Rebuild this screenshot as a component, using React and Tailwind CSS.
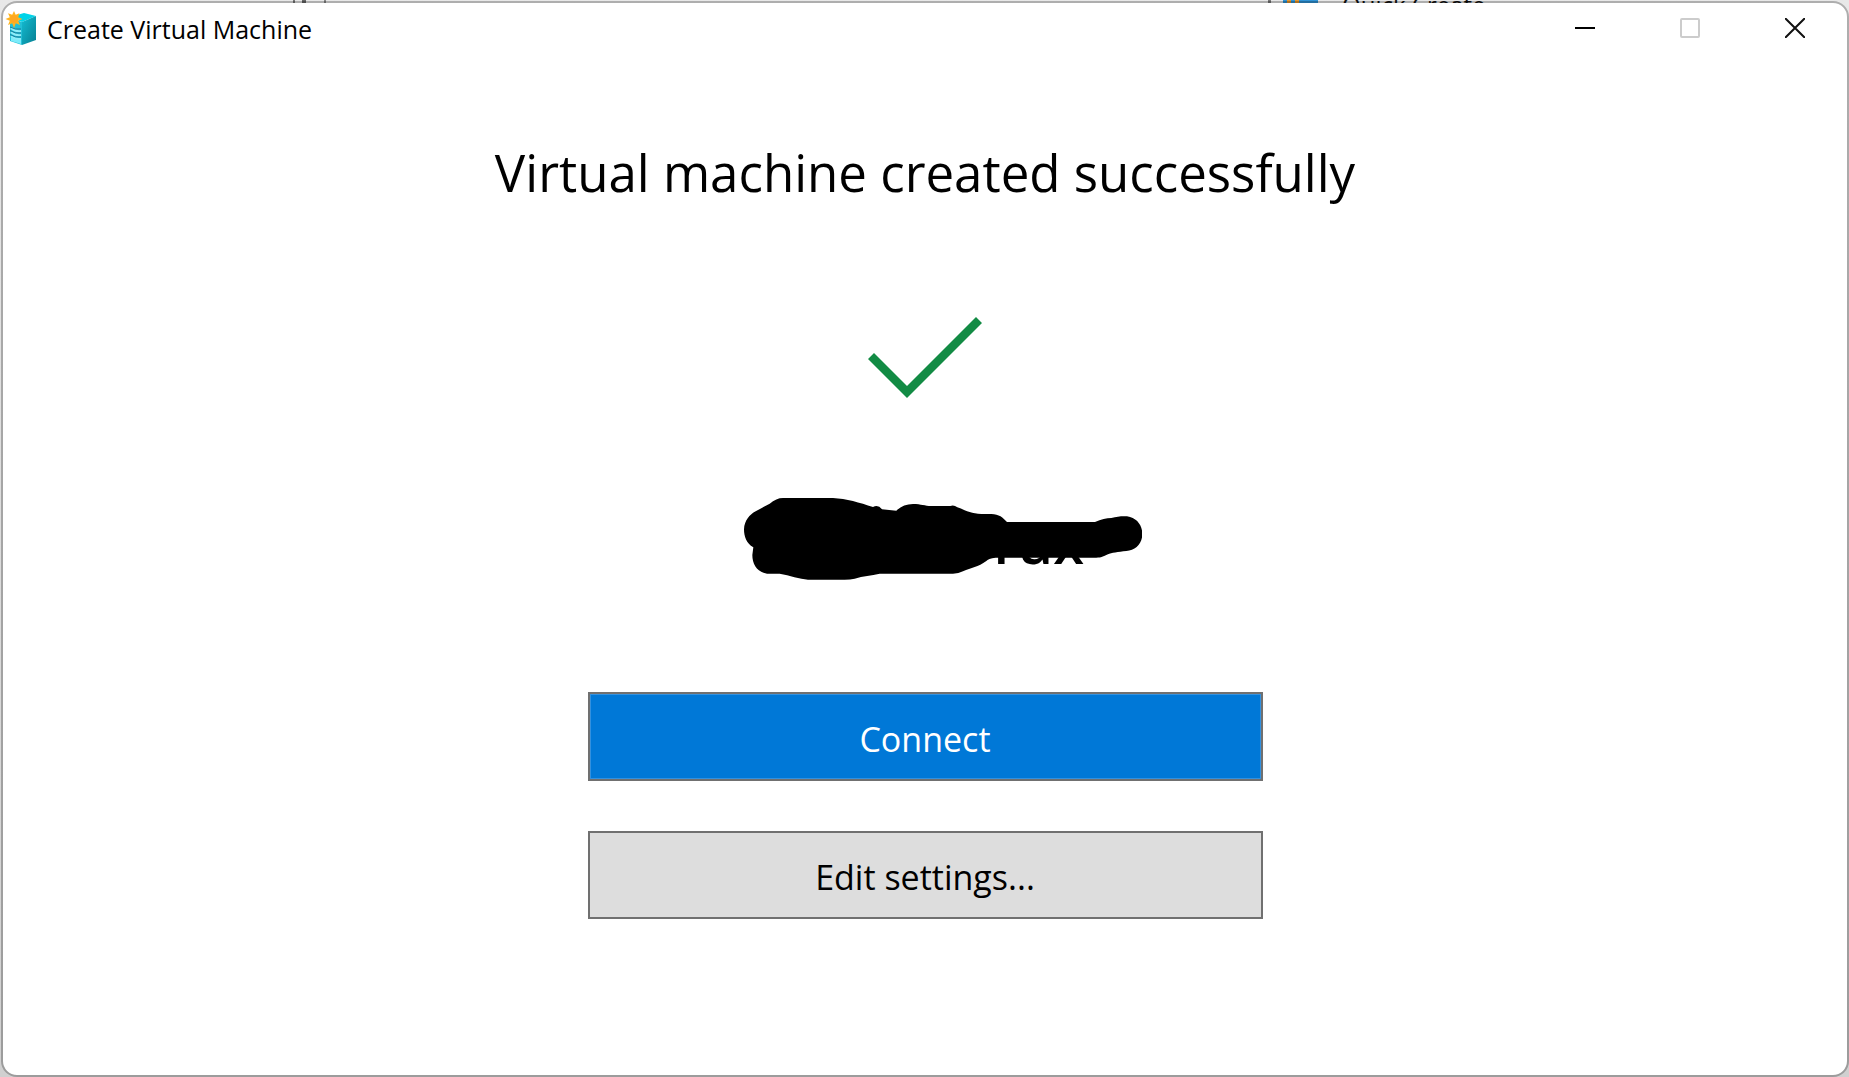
import React from "react";

function ServerIcon() {
  return (
    <svg width="32" height="36" viewBox="0 0 32 36" aria-hidden="true">
      <defs>
        <linearGradient id="side" x1="0" y1="0" x2="1" y2="1">
          <stop offset="0" stopColor="#14bcd2" />
          <stop offset="1" stopColor="#067f92" />
        </linearGradient>
      </defs>
      <path d="M5 7 19 3 31 6 17 12Z" fill="#00d3e8" />
      <path d="M17 12 31 6V30L17 35Z" fill="url(#side)" />
      <path d="M5 8 17 12V35L5 31Z" fill="#22bfd6" />
      <path d="M6 27 16 29V34L6 31Z" fill="#7cebfa" />
      <path d="M6 18Q10 22 16 21M6 22Q10 26 16 25M6 26Q10 29 16 29" stroke="#8fecf8" strokeWidth="2" fill="none" />
      <path d="M5 17Q10 20 16 19M5 20.500Q10 24 16 23M5 24.500Q10 28 16 27" stroke="#1c7d9c" strokeWidth="1" fill="none" />
      <path d="M9 1 10.700 4.800 14.500 3.300 13.200 7.200 17.500 9 13.200 10.800 15 15 10.800 13.300 9 18 7.200 13.300 3 15 4.800 10.800 0.500 9 4.800 7.200 3 3.300 7.200 4.800Z" fill="#ffb41f" />
      <circle cx="9" cy="9" r="4" fill="#ffa820" />
    </svg>
  );
}

function WindowBehind() {
  return (
    <div className="absolute inset-x-0 top-0 h-[3px] overflow-hidden" aria-hidden="true">
      <div className="flex h-2.5 items-center">
        <div className="flex w-[1283px] items-center">
          <span className="ml-[293px] w-0.5 bg-[#777] py-2" />
          <span className="ml-[7px] w-1 bg-[#666] py-2" />
          <span className="ml-[18px] w-0.5 bg-[#888] py-2" />
          <span className="mr-3 ml-auto w-[3px] bg-[#777] py-2" />
        </div>
        <span className="flex w-[35px] bg-[#2f93d6] pb-2 pl-1">
          <span className="w-3 border-x-4 border-[#e8962a] py-1" />
        </span>
        <span className="ml-6 text-2xl leading-6 whitespace-nowrap text-[#111]">Quick Create</span>
      </div>
    </div>
  );
}

function TitleBar() {
  return (
    <header className="flex h-[50px] shrink-0 items-center justify-between">
      <div className="flex items-center gap-2.5 pl-0.5">
        <ServerIcon />
        <span className="pt-0.5 text-[25px] leading-9">Create Virtual Machine</span>
      </div>
      <div className="flex">
        <button aria-label="Minimize" className="flex h-11 w-[105px] items-center justify-center">
          <svg width="20" height="20"><path d="M0 10H20" stroke="#000" strokeWidth="2" /></svg>
        </button>
        <button aria-label="Maximize" disabled className="flex h-11 w-[105px] items-center justify-center">
          <svg width="20" height="20"><rect x="1" y="1" width="18" height="18" rx="1" fill="none" stroke="#ccc" strokeWidth="2" /></svg>
        </button>
        <button aria-label="Close" className="flex h-11 w-[105px] items-center justify-center">
          <svg width="20" height="20"><path d="M0 0 20 20M20 0 0 20" stroke="#111" strokeWidth="2" /></svg>
        </button>
      </div>
    </header>
  );
}

function MachineName() {
  return (
    <div className="relative mt-[99px] ml-9 flex h-[82px] w-[398px] items-start justify-end pr-[58px]">
      <span className="text-[56px] leading-[88px] font-semibold">rux</span>
      <svg className="absolute inset-0" width="398" height="82" viewBox="43 54 1194 246" aria-hidden="true">
        <path d="M160 54H310C350 56 390 68 430 81Q445 72 457 88L500 92Q520 72 550 72C575 72 585 78 605 78H662Q672 73 683 82C710 92 725 101 755 102H785C808 102 820 113 832 126H1096C1115 117 1130 115 1145 114C1165 108 1182 108 1192 109C1222 113 1238 137 1238 162C1238 190 1218 212 1190 213C1165 216 1145 218 1135 223C1120 230 1115 233 1100 233H798Q775 235 770 243C745 262 725 262 700 274Q687 281 670 281H450C425 287 400 287 375 296Q362 299 345 299H235C210 297 180 286 150 281H118C85 280 68 255 68 225L71 202C50 190 43 170 43 148C44 122 60 104 78 94L120 71Q140 54 160 54Z" fill="#000" />
      </svg>
    </div>
  );
}

export default function App() {
  return (
    <div className="relative flex min-h-screen flex-col bg-linear-to-b from-[#e8e8e8] to-[#d0d0d0] pt-px pl-px font-['Open_Sans','Noto_Sans',sans-serif] text-black">
      <WindowBehind />
      <div className="relative flex flex-1 flex-col rounded-2xl border-2 border-black/25 bg-white bg-clip-padding">
        <TitleBar />
        <main className="flex flex-1 flex-col items-center">
          <h1 className="mt-[83px] text-[51px] leading-[72px]">Virtual machine created successfully</h1>
          <svg className="mt-[109px]" width="114" height="82" viewBox="0 0 114 82" role="img" aria-label="Success">
            <path d="M0 42 6 36 39 69 108 0 114 6 39 81Z" fill="#128b44" />
          </svg>
          <MachineName />
          <div className="mt-[112px] flex w-[675px] max-w-full flex-col gap-[50px]">
            <button className="h-[89px] border-2 border-[#707070] bg-[#0078d7] pt-1.5 text-[34px] text-white inset-ring inset-ring-[#3391df]">Connect</button>
            <button className="h-[88px] border-2 border-[#707070] bg-[#ddd] pt-1 text-[34px]">Edit settings...</button>
          </div>
        </main>
      </div>
    </div>
  );
}
